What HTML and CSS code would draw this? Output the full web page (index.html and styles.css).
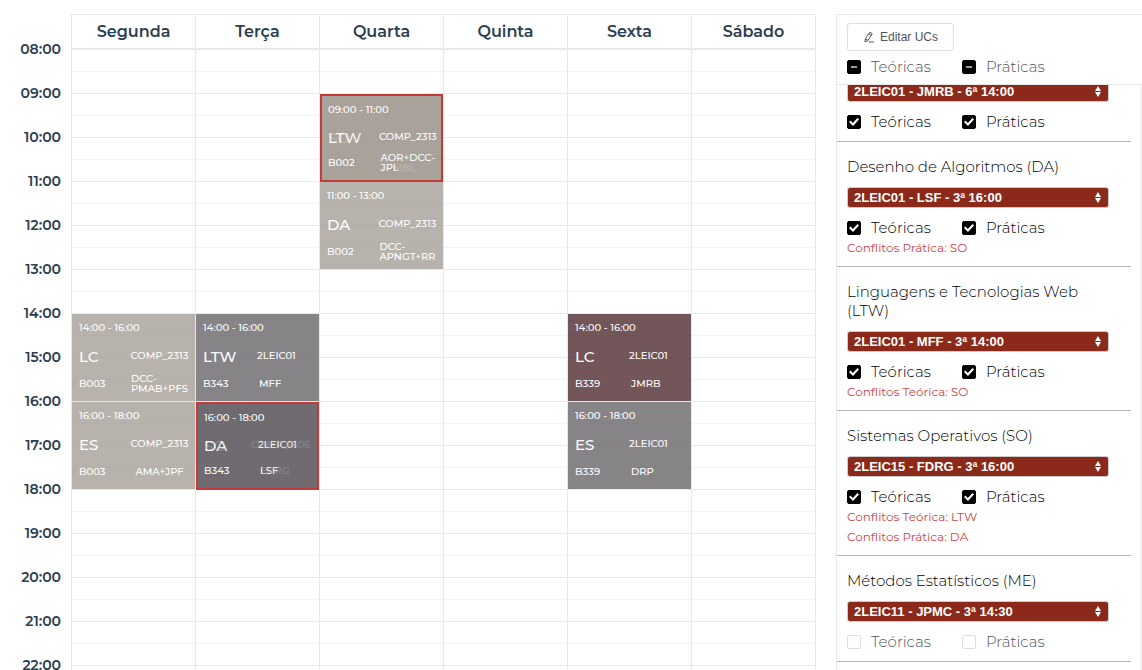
FILE: index.html
```html
<!DOCTYPE html>
<html lang="pt">
<head>
<meta charset="utf-8">
<meta name="viewport" content="width=device-width, initial-scale=1">
<title>Horário</title>
<link rel="stylesheet" href="styles.css">
</head>
<body>
<div class="app">
  <main class="calendar">
    <ol class="hours">
      <li>08:00</li><li>09:00</li><li>10:00</li><li>11:00</li><li>12:00</li><li>13:00</li><li>14:00</li><li>15:00</li><li>16:00</li><li>17:00</li><li>18:00</li><li>19:00</li><li>20:00</li><li>21:00</li><li>22:00</li>
    </ol>
    <div class="week">
      <section class="day">
        <h2>Segunda</h2>
        <div class="slots">
          <article class="event lecture at-14"><time>14:00 - 16:00</time><strong>LC</strong><span>COMP_2313</span><span class="room">B003</span><span class="staff">DCC-<br>PMAB+PFS</span></article>
          <article class="event lecture at-16"><time>16:00 - 18:00</time><strong>ES</strong><span>COMP_2313</span><span class="room">B003</span><span class="staff">AMA+JPF</span></article>
        </div>
      </section>
      <section class="day">
        <h2>Terça</h2>
        <div class="slots">
          <article class="event practice at-14"><time>14:00 - 16:00</time><strong>LTW</strong><span>2LEIC01</span><span class="room">B343</span><span class="staff">MFF</span></article>
          <div class="conflict at-16">
            <article class="event practice"><time>16:00 - 18:00</time><strong>SO</strong><span class="wide">COMP_1606</span><span class="room">B343</span><span class="staff">FDRG</span></article>
            <article class="event practice"><time>16:00 - 18:00</time><strong>DA</strong><span>2LEIC01</span><span class="room">B343</span><span class="staff">LSF</span></article>
          </div>
        </div>
      </section>
      <section class="day">
        <h2>Quarta</h2>
        <div class="slots">
          <div class="conflict at-9">
            <article class="event lecture"><time>09:00 - 11:00</time><strong>SO</strong><span>COMP_2313</span><span class="room">B002</span><span class="staff">AOR+DCC-<br>JPMBL</span></article>
            <article class="event lecture"><time>09:00 - 11:00</time><strong>LTW</strong><span>COMP_2313</span><span class="room">B002</span><span class="staff">AOR+DCC-<br>JPL</span></article>
          </div>
          <article class="event lecture at-11"><time>11:00 - 13:00</time><strong>DA</strong><span>COMP_2313</span><span class="room">B002</span><span class="staff">DCC-<br>APNGT+RR</span></article>
        </div>
      </section>
      <section class="day"><h2>Quinta</h2><div class="slots"></div></section>
      <section class="day">
        <h2>Sexta</h2>
        <div class="slots">
          <article class="event practice selected at-14"><time>14:00 - 16:00</time><strong>LC</strong><span>2LEIC01</span><span class="room">B339</span><span class="staff">JMRB</span></article>
          <article class="event practice at-16"><time>16:00 - 18:00</time><strong>ES</strong><span>2LEIC01</span><span class="room">B339</span><span class="staff">DRP</span></article>
        </div>
      </section>
      <section class="day"><h2>Sábado</h2><div class="slots"></div></section>
    </div>
  </main>

  <aside class="sidebar">
    <header class="toolbar">
      <button type="button" class="edit">
        <svg width="12" height="12" viewBox="0 0 12 12" fill="none" stroke="currentColor" aria-hidden="true"><path d="M6.8 1.2 9.2 2.6 5 9.4 2 11 2.3 7.8ZM5.8 2.8 8.2 4.3M2.3 7.8 5 9.4M5.5 11H11"/></svg>
        Editar UCs
      </button>
      <div class="checks">
        <label><input type="checkbox" class="mixed">Teóricas</label>
        <label><input type="checkbox" class="mixed">Práticas</label>
      </div>
    </header>
    <div class="courses">
      <section class="course">
        <h3>Laboratório de Computadores (LC)</h3>
        <div class="picker"><select aria-label="Turma de LC"><option>2LEIC01 - JMRB - 6ª 14:00</option></select><svg width="6" height="11" viewBox="0 0 6 11" aria-hidden="true"><path d="M3 0 6 5H0ZM0 6H6L3 11Z"/></svg></div>
        <div class="checks"><label><input type="checkbox" checked>Teóricas</label><label><input type="checkbox" checked>Práticas</label></div>
      </section>
      <section class="course">
        <h3>Desenho de Algoritmos (DA)</h3>
        <div class="picker"><select aria-label="Turma de DA"><option>2LEIC01 - LSF - 3ª 16:00</option></select><svg width="6" height="11" viewBox="0 0 6 11" aria-hidden="true"><path d="M3 0 6 5H0ZM0 6H6L3 11Z"/></svg></div>
        <div class="checks"><label><input type="checkbox" checked>Teóricas</label><label><input type="checkbox" checked>Práticas</label></div>
        <div class="warnings"><p>Conflitos Prática: SO</p></div>
      </section>
      <section class="course">
        <h3>Linguagens e Tecnologias Web (LTW)</h3>
        <div class="picker"><select aria-label="Turma de LTW"><option>2LEIC01 - MFF - 3ª 14:00</option></select><svg width="6" height="11" viewBox="0 0 6 11" aria-hidden="true"><path d="M3 0 6 5H0ZM0 6H6L3 11Z"/></svg></div>
        <div class="checks"><label><input type="checkbox" checked>Teóricas</label><label><input type="checkbox" checked>Práticas</label></div>
        <div class="warnings"><p>Conflitos Teórica: SO</p></div>
      </section>
      <section class="course">
        <h3>Sistemas Operativos (SO)</h3>
        <div class="picker"><select aria-label="Turma de SO"><option>2LEIC15 - FDRG - 3ª 16:00</option></select><svg width="6" height="11" viewBox="0 0 6 11" aria-hidden="true"><path d="M3 0 6 5H0ZM0 6H6L3 11Z"/></svg></div>
        <div class="checks"><label><input type="checkbox" checked>Teóricas</label><label><input type="checkbox" checked>Práticas</label></div>
        <div class="warnings"><p>Conflitos Teórica: LTW</p><p>Conflitos Prática: DA</p></div>
      </section>
      <section class="course">
        <h3>Métodos Estatísticos (ME)</h3>
        <div class="picker"><select aria-label="Turma de ME"><option>2LEIC11 - JPMC - 3ª 14:30</option></select><svg width="6" height="11" viewBox="0 0 6 11" aria-hidden="true"><path d="M3 0 6 5H0ZM0 6H6L3 11Z"/></svg></div>
        <div class="checks"><label><input type="checkbox">Teóricas</label><label><input type="checkbox">Práticas</label></div>
      </section>
    </div>
  </aside>
</div>
<script src="app.js"></script>
</body>
</html>
```
FILE: styles.css
```css
* { box-sizing: border-box; }

body {
  margin: 0;
  background: #fff;
  color: #2c3e50;
  font-family: Montserrat, Inter, sans-serif;
}

h2, h3, p, ol { margin: 0; padding: 0; }

.app {
  display: flex;
  gap: 20px;
  height: 100vh;
  padding-top: 14px;
  overflow: hidden;
}

/* Calendar */
.calendar {
  display: grid;
  flex: 1;
  grid-template-columns: 71px 1fr;
  align-items: start;
}

.hours {
  padding: 13px 10px 0 0;
  font-size: 14px;
  font-weight: 600;
  line-height: 44px;
  text-align: right;
  list-style: none;
}

.week {
  display: grid;
  grid-template-columns: repeat(6, 1fr);
  border-top: 1px solid #e8e8e8;
  border-right: 1px solid #e8e8e8;
}

.day { border-left: 1px solid #e8e8e8; min-width: 0; }

.day h2 {
  border-bottom: 2px solid #e8e8e8;
  font-size: 16px;
  font-weight: 600;
  line-height: 33px;
  text-align: center;
}

.slots {
  display: grid;
  grid-template-rows: repeat(30, 22px);
  background: repeating-linear-gradient(#fff 0 21px, #f4f4f4 21px 22px, #fff 22px 43px, #e8e8e8 43px 44px);
}

.at-9 { grid-row: 3 / span 4; }
.at-11 { grid-row: 7 / span 4; }
.at-14 { grid-row: 13 / span 4; }
.at-16 { grid-row: 17 / span 4; }

.event {
  display: grid;
  grid-template-columns: 51px 1fr;
  grid-template-rows: 28px 28px 28px;
  align-items: center;
  min-width: 0;
  margin-bottom: 1px;
  padding-left: 7px;
  color: #fff;
  font-size: 10px;
  font-weight: 500;
  line-height: 10px;
  opacity: 0.8;
}

.event time { grid-column: 1 / -1; }

.event strong {
  padding-top: 2px;
  font-size: 15px;
  font-weight: 500;
  line-height: 18px;
}

.lecture { background: #a69f97; padding-right: 6px; text-align: center; }
.lecture time, .lecture strong, .lecture .room { text-align: left; }
.lecture .staff { justify-self: center; text-align: left; }
.practice { background: #6a666b; grid-template-columns: 54px 1fr; }
.practice .staff { padding-left: 2px; }
.practice .wide { margin-left: -7px; }
.selected { background: #512c30; }

.conflict {
  display: grid;
  border: 2px solid #c43a37;
}

.conflict .event {
  grid-area: 1 / 1;
  grid-template-rows: 28px 26px 26px;
  margin: 0;
  padding-left: 6px;
  padding-right: 5px;
}

/* Sidebar */
.sidebar {
  display: flex;
  flex-direction: column;
  width: 306px;
  border-top: 1px solid #e8e8e8;
  border-left: 1px solid #e8e8e8;
  color: #000;
}

.toolbar {
  padding: 8px 10px 7px;
  border-bottom: 1px solid #e8e8e8;
  color: #606266;
}

.edit {
  display: flex;
  align-items: center;
  gap: 5px;
  height: 28px;
  margin-bottom: 6px;
  padding: 0 15px;
  border: 1px solid #dcdfe6;
  border-radius: 3px;
  background: #fff;
  color: #50555c;
  font: 12px "Liberation Sans", sans-serif;
}

.checks { display: flex; }

.checks label {
  display: flex;
  align-items: center;
  gap: 10px;
  width: 115px;
  font-size: 15px;
  font-weight: 300;
  line-height: 20px;
}

.checks label:has(:not(:checked)) { color: #505256; }

.checks input {
  display: grid;
  place-items: center;
  width: 14px;
  height: 14px;
  margin: 0;
  border: 1px solid #dcdfe6;
  border-radius: 2px;
  appearance: none;
  background: #fff;
}

.checks input:checked, .checks input:indeterminate { border-color: #000; background: #000; }

.checks input:checked::before {
  width: 10px;
  height: 8px;
  background: #fff;
  clip-path: polygon(0 50%, 15% 32%, 38% 62%, 85% 0, 100% 18%, 40% 100%);
  content: "";
}

.checks input:indeterminate::before {
  width: 6px;
  height: 2px;
  background: #999;
  content: "";
}

.courses {
  flex: 1;
  min-height: 0;
  padding: 0 9px 20px 0;
  border-right: 2px solid #f1f1f1;
  overflow-y: auto;
  scrollbar-width: none;
}

.course {
  padding: 15px 10px 9px;
  border-bottom: 1px solid #b5b5b5;
}

.course:has(.warnings) { padding-bottom: 8px; }

.course h3 {
  font-size: 15px;
  font-weight: 300;
  line-height: 19px;
}

.picker {
  position: relative;
  margin: 11px 12px 10px 0;
}

.picker select {
  display: block;
  width: 100%;
  height: 21px;
  padding: 0 6px;
  border: 1px solid #ccc;
  border-radius: 3px;
  appearance: none;
  background: #8b2a1a;
  color: #fff;
  font: bold 13px "Liberation Sans", sans-serif;
}

.picker svg {
  position: absolute;
  top: 5px;
  right: 8px;
  fill: #fff;
  pointer-events: none;
}

.warnings {
  color: #cd4545;
  font-size: 12px;
  font-weight: 400;
  line-height: 20px;
}
```
FILE: app.js
```js
document.querySelectorAll(".mixed").forEach((box) => { box.indeterminate = true; });
document.querySelector(".courses").scrollTop = 49;
```
